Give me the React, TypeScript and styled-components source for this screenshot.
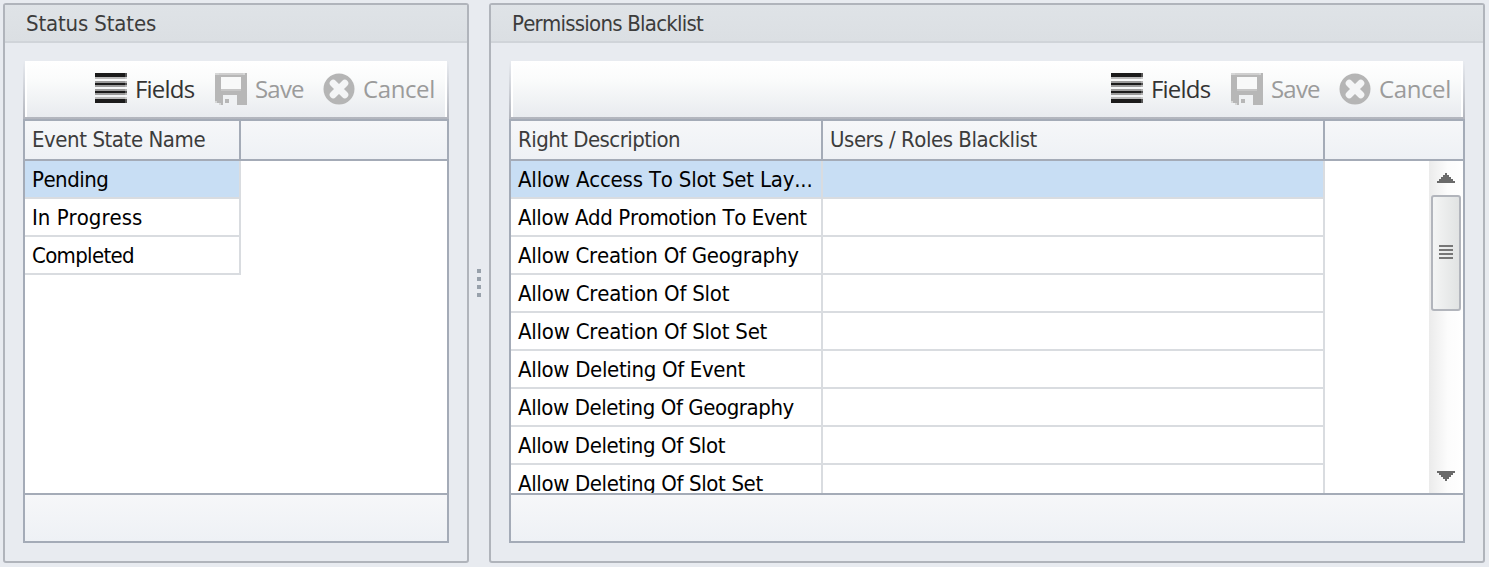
import React from "react";
import styled, { createGlobalStyle } from "styled-components";

const GlobalStyle = createGlobalStyle`
  * { box-sizing: border-box; }
  body { margin: 0; background: #e8ebf0; overflow: hidden; }
`;

const line = "#a4abb7";
const cellLine = "#d9dce0";

const Page = styled.main`
  height: 567px;
  padding: 3px 4px 4px 3px;
  display: grid;
  grid-template-columns: 466px 20px 1fr;
  font: 22px/30px "DejaVu Sans Condensed", "DejaVu Sans", sans-serif;
  font-stretch: condensed;
  font-kerning: none;
`;

const Panel = styled.section`
  display: flex;
  flex-direction: column;
  border: 2px solid #b0b4bb;
  border-radius: 3px;
  min-width: 0;
`;

const PanelTitle = styled.h2`
  margin: 0;
  height: 36px;
  padding: 4px 0 0 21px;
  font: inherit;
  color: #3c3c3c;
  background: linear-gradient(#dfe3e7, #dbdfe3);
`;

const PanelBody = styled.div`
  flex: 1;
  border-top: 2px solid #d0d4d9;
  padding: 18px;
  display: flex;
  flex-direction: column;
`;

const Toolbar = styled.div`
  height: 58px;
  padding: 0 12px 0 0;
  display: flex;
  align-items: center;
  justify-content: flex-end;
  gap: 20px;
  border: solid transparent;
  border-width: 0 2px 2px;
  background:
    linear-gradient(#fff, #fafbfb 35%, #e8ebef) padding-box,
    linear-gradient(#e8ebf0, #b2b5bd) border-box;
  box-shadow: inset 2px 0 #fff, inset -2px 0 #fff;
`;

const Tool = styled.button<{ $disabled?: boolean; $width: number; $spacing: number }>`
  border: 0;
  padding: 0;
  width: ${(p) => p.$width}px;
  height: 54px;
  display: flex;
  align-items: center;
  gap: 8px;
  background: none;
  font: 24px/32px "Open Sans", sans-serif;
  letter-spacing: ${(p) => p.$spacing}px;
  color: ${(p) => (p.$disabled ? "#9b9b9b" : "#333")};
  white-space: nowrap;
  svg { flex: none; }
`;

const Grid = styled.div`
  height: 424px;
  border: 2px solid ${line};
  display: grid;
  grid-template-rows: 40px 332px 48px;
`;

const HeaderRow = styled.div<{ $cols: string }>`
  display: grid;
  grid-template-columns: ${(p) => p.$cols};
  border-bottom: 2px solid ${line};
  background: linear-gradient(#f6f7f9, #eef1f5);
`;

const HeaderCell = styled.div`
  padding: 4px 0 0 7px;
  color: #3c3c3c;
  border-right: 2px solid ${line};
  white-space: nowrap;
`;

const GridBody = styled.div`
  display: flex;
  justify-content: space-between;
  overflow: hidden;
  background: #fff;
`;

const Rows = styled.div`
  display: flex;
  flex-direction: column;
`;

const Row = styled.div<{ $cols: string; $selected?: boolean }>`
  flex: none;
  height: 38px;
  display: grid;
  grid-template-columns: ${(p) => p.$cols};
  background: ${(p) => (p.$selected ? "#c8def4" : "#fff")};
`;

const Cell = styled.div`
  padding: 4px 0 0 7px;
  color: #000;
  border: solid ${cellLine};
  border-width: 0 2px 2px 0;
  white-space: nowrap;
`;

const Label = styled.span<{ $spacing: number }>`
  letter-spacing: ${(p) => p.$spacing}px;
`;

const GridFooter = styled.div`
  border-top: 2px solid ${line};
  background: linear-gradient(#f6f7f9, #eef1f5);
`;

const Splitter = styled.div`
  display: flex;
  flex-direction: column;
  align-items: center;
  justify-content: center;
  gap: 4px;
`;

const Dot = styled.i`
  width: 4px;
  height: 4px;
  background: #98a1ab;
`;

const ScrollBar = styled.div`
  width: 34px;
  display: flex;
  flex-direction: column;
  align-items: center;
  padding: 12px 0;
  background: linear-gradient(90deg, #ebebeb, #fcfcfc 55%, #fff);
`;

const Thumb = styled.div`
  width: 30px;
  height: 116px;
  margin: 12px 0 auto;
  padding-bottom: 2px;
  display: flex;
  flex-direction: column;
  align-items: center;
  justify-content: center;
  gap: 2px;
  border: 2px solid #b2b5bc;
  border-radius: 3px;
  background: linear-gradient(90deg, #f4f5f5, #e1e3e3);
`;

const Grip = styled.i`
  width: 14px;
  height: 2px;
  background: #777;
`;

const FieldsIcon = () => (
  <svg width="32" height="32" shapeRendering="crispEdges">
    <path fill="#1b1b1b" d="M0 0h32v4H0zM0 10h32v2H0zM0 18h32v2H0zM0 26h32v4H0z" />
    <path fill="#9b9b9b" d="M0 8h32v2H0zM0 12h32v2H0zM0 16h32v2H0zM0 20h32v2H0z" />
    <path fill="#bbb" d="M0 4h32v2H0zM0 24h32v2H0z" />
    <path fill="#fff" opacity=".25" d="M30 0h2v30h-2z" />
  </svg>
);

const SaveIcon = () => (
  <svg width="32" height="32" shapeRendering="crispEdges">
    <path fill="#d6d7d7" d="M0 0h32v30h-2v2H4v-2H0z" />
    <path fill="#b7b7b7" d="M2 2h28v-2h2v32H6v-2H2v-2H0V2h2z" />
    <path fill="#cfcfcf" d="M4 0h24v2H4z" />
    <path fill="#f8f9f9" d="M6 4h20v12H6z" />
    <path fill="#c6c6c6" d="M6 16h20v2H6z" />
    <path fill="#eff1f3" d="M8 22h14v10H8z" />
    <path fill="#b7b7b7" d="M10 26h4v4h-4z" />
  </svg>
);

const CancelIcon = () => (
  <svg width="32" height="32" viewBox="0 0 32 32">
    <circle cx="16" cy="16" r="15.5" fill="#b5b5b5" />
    <path d="M10.2 10.2 21.8 21.8M21.8 10.2 10.2 21.8" stroke="#f4f5f6" strokeWidth="7" strokeLinecap="round" />
  </svg>
);

const Actions = () => (
  <Toolbar>
    <Tool $width={100} $spacing={-0.8}><FieldsIcon /><span>Fields</span></Tool>
    <Tool $width={88} $spacing={-0.8} $disabled><SaveIcon /><span>Save</span></Tool>
    <Tool $width={112} $spacing={-0.4} $disabled><CancelIcon /><span>Cancel</span></Tool>
  </Toolbar>
);

type TextItem = [text: string, spacing: number];

const states: TextItem[] = [["Pending", -0.5], ["In Progress", 0], ["Completed", -0.67]];

const rights: TextItem[] = [
  ["Allow Access To Slot Set Lay...", -0.2],
  ["Allow Add Promotion To Event", -0.37],
  ["Allow Creation Of Geography", -0.26],
  ["Allow Creation Of Slot", -0.23],
  ["Allow Creation Of Slot Set", -0.23],
  ["Allow Deleting Of Event", -0.33],
  ["Allow Deleting Of Geography", -0.41],
  ["Allow Deleting Of Slot", -0.39],
  ["Allow Deleting Of Slot Set", -0.37],
];

const Text = ({ item }: { item: TextItem }) => <Label $spacing={item[1]}>{item[0]}</Label>;

export default function App() {
  const stateCols = "216px";
  const rightCols = "312px 502px";
  return (
    <>
      <GlobalStyle />
      <Page>
        <Panel>
          <PanelTitle><Text item={["Status States", -0.15]} /></PanelTitle>
          <PanelBody>
            <Actions />
            <Grid>
              <HeaderRow $cols={stateCols}>
                <HeaderCell><Text item={["Event State Name", -0.43]} /></HeaderCell>
              </HeaderRow>
              <GridBody>
                <Rows>
                  {states.map((s, i) => (
                    <Row key={s[0]} $cols={stateCols} $selected={i === 0}>
                      <Cell><Text item={s} /></Cell>
                    </Row>
                  ))}
                </Rows>
              </GridBody>
              <GridFooter />
            </Grid>
          </PanelBody>
        </Panel>
        <Splitter><Dot /><Dot /><Dot /><Dot /></Splitter>
        <Panel>
          <PanelTitle><Text item={["Permissions Blacklist", -0.76]} /></PanelTitle>
          <PanelBody>
            <Actions />
            <Grid>
              <HeaderRow $cols={rightCols}>
                <HeaderCell><Text item={["Right Description", -0.53]} /></HeaderCell>
                <HeaderCell><Text item={["Users / Roles Blacklist", -0.46]} /></HeaderCell>
              </HeaderRow>
              <GridBody>
                <Rows>
                  {rights.map((r, i) => (
                    <Row key={r[0]} $cols={rightCols} $selected={i === 0}>
                      <Cell><Text item={r} /></Cell>
                      <Cell />
                    </Row>
                  ))}
                </Rows>
                <ScrollBar>
                  <svg width="18" height="10" shapeRendering="crispEdges">
                    <path fill="#6a6a6a" d="M8 0h2v2h2v2h2v2h2v2h2v2H0V8h2V6h2V4h2V2h2z" />
                  </svg>
                  <Thumb><Grip /><Grip /><Grip /><Grip /></Thumb>
                  <svg width="18" height="10" shapeRendering="crispEdges">
                    <path fill="#6a6a6a" d="M0 0h18v2h-2v2h-2v2h-2v2h-2v2H8V8H6V6H4V4H2V2H0z" />
                  </svg>
                </ScrollBar>
              </GridBody>
              <GridFooter />
            </Grid>
          </PanelBody>
        </Panel>
      </Page>
    </>
  );
}
